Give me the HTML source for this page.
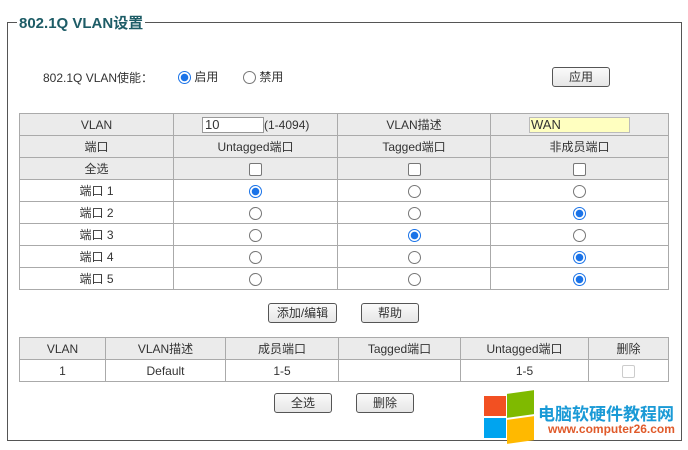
<!DOCTYPE html>
<html><head><meta charset="utf-8"><style>
body{margin:0;width:688px;height:450px;background:#fff;font-family:"Liberation Sans","Noto Sans CJK SC",sans-serif;font-size:12px;color:#333;position:relative;overflow:hidden}
.abs{position:absolute}
.fs{left:7px;top:22px;width:673px;height:417px;border:1px solid #555}
.leg{left:17px;top:12px;background:#fff;padding:0 2px;font-size:15px;font-weight:bold;color:#1d5c66}
table{border-collapse:collapse;position:absolute}
td{border:1px solid #aaa;text-align:center;padding:0;height:21px}
.g td{background:#ebebeb}
.btn{position:absolute;border:1px solid #555;border-radius:3px;background:linear-gradient(#fafafa,#e6e6e6);text-align:center;font-size:12px;line-height:18px;height:18px}
.r{display:inline-block;width:13px;height:13px;border:1px solid #777;border-radius:50%;vertical-align:middle;box-sizing:border-box;background:#fff}
.r.on{border:1px solid #1a73e8;background:radial-gradient(circle,#1a73e8 0 3.5px,#fff 4px)}
.c{display:inline-block;width:13px;height:13px;border:1px solid #777;border-radius:2px;vertical-align:middle;box-sizing:border-box;background:#fff}
</style></head><body>
<div class="abs fs"></div>
<div class="abs leg">802.1Q VLAN设置</div>
<div class="abs" style="left:43px;top:69px">802.1Q VLAN使能：</div>
<div class="abs" style="left:178px;top:68px"><span class="r on"></span> 启用</div>
<div class="abs" style="left:243px;top:68px"><span class="r"></span> 禁用</div>
<div class="btn" style="left:552px;top:67px;width:56px">应用</div>
<table style="left:19px;top:113px;width:650px">
<colgroup><col style="width:154px"><col style="width:164px"><col style="width:153px"><col style="width:178px"></colgroup>
<tr class="g"><td>VLAN</td><td style="text-align:left;padding-left:28px"><span style="display:inline-block;width:58px;height:14px;border:1px solid #999;background:#fff;text-align:left;padding-left:2px;line-height:14px;font-size:13px">10</span>(1-4094)</td><td>VLAN描述</td><td><span style="display:inline-block;width:98px;height:14px;border:1px solid #bbb;background:#ffffc0;text-align:left;line-height:14px;font-size:13px;padding-left:1px">WAN</span></td></tr>
<tr class="g"><td>端口</td><td>Untagged端口</td><td>Tagged端口</td><td>非成员端口</td></tr>
<tr class="g"><td>全选</td><td><span class="c"></span></td><td><span class="c"></span></td><td><span class="c"></span></td></tr>
<tr><td>端口 1</td><td><span class="r on"></span></td><td><span class="r"></span></td><td><span class="r"></span></td></tr>
<tr><td>端口 2</td><td><span class="r"></span></td><td><span class="r"></span></td><td><span class="r on"></span></td></tr>
<tr><td>端口 3</td><td><span class="r"></span></td><td><span class="r on"></span></td><td><span class="r"></span></td></tr>
<tr><td>端口 4</td><td><span class="r"></span></td><td><span class="r"></span></td><td><span class="r on"></span></td></tr>
<tr><td>端口 5</td><td><span class="r"></span></td><td><span class="r"></span></td><td><span class="r on"></span></td></tr>
</table>
<div class="btn" style="left:268px;top:303px;width:67px">添加/编辑</div>
<div class="btn" style="left:361px;top:303px;width:56px">帮助</div>
<table style="left:19px;top:337px;width:650px">
<colgroup><col style="width:86px"><col style="width:120px"><col style="width:113px"><col style="width:122px"><col style="width:128px"><col style="width:80px"></colgroup>
<tr class="g"><td>VLAN</td><td>VLAN描述</td><td>成员端口</td><td>Tagged端口</td><td>Untagged端口</td><td>删除</td></tr>
<tr><td>1</td><td>Default</td><td>1-5</td><td></td><td>1-5</td><td><span class="c" style="border-color:#ccc"></span></td></tr>
</table>
<div class="btn" style="left:274px;top:393px;width:56px">全选</div>
<div class="btn" style="left:356px;top:393px;width:56px">删除</div>
<div class="abs" style="left:484px;top:396px;width:22px;height:20px;background:#f25022"></div>
<div class="abs" style="left:507px;top:392px;width:27px;height:24px;background:#7fba00;transform:skewY(-8deg)"></div>
<div class="abs" style="left:484px;top:418px;width:22px;height:20px;background:#00a4ef"></div>
<div class="abs" style="left:507px;top:418px;width:27px;height:24px;background:#ffb900;transform:skewY(-8deg)"></div>
<div class="abs" style="left:538px;top:400px;font-size:17px;font-weight:bold;color:#1a9ad6">电脑软硬件教程网</div>
<div class="abs" style="left:548px;top:422px;font-size:12px;font-weight:bold;color:#e05a2a">www.computer26.com</div>
</body></html>
